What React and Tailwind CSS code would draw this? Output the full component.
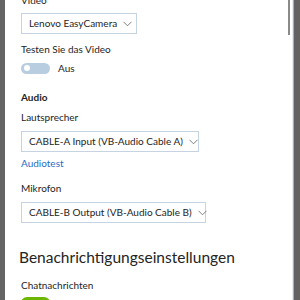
import React from "react";

function Chevron() {
  return (
    <svg width="9" height="6" viewBox="0 0 9 6" className="shrink-0">
      <path d="M0.5 0.8 L4.5 4.8 L8.5 0.8" fill="none" stroke="#707070" strokeWidth="0.9" />
    </svg>
  );
}

function Select({ label, width }) {
  return (
    <div
      className={`flex items-center h-[21px] border border-[#c5d3e2] bg-white pl-[7px] pr-[8px] gap-[6px] ${width}`}
    >
      <span className="text-[10px] text-[#252423] whitespace-nowrap flex-1">{label}</span>
      <Chevron />
    </div>
  );
}

export default function App() {
  return (
    <div
      className="w-[300px] h-[300px] flex bg-white overflow-hidden"
      style={{ fontFamily: 'Lato, "Noto Sans", sans-serif' }}
    >
      <div className="w-[5px] bg-[#646464] shrink-0" />
      <div className="flex-1 relative overflow-hidden pl-[16px] text-[#252423]">
        <div className="flex flex-col -mt-[8px]">
          <div className="h-[16px] flex items-center text-[10px]">Video</div>
          <div className="mt-[5px]">
            <Select label="Lenovo EasyCamera" width="w-[116px]" />
          </div>
          <div className="h-[16px] mt-[7px] flex items-center text-[10px]">Testen Sie das Video</div>
          <div className="flex items-center gap-[8px] h-[12px] mt-[5px]">
            <div className="w-[29px] h-[11px] rounded-full bg-[#b9cde0] flex items-center pl-[3px]">
              <div className="w-[6px] h-[6px] rounded-full bg-white" />
            </div>
            <span className="text-[10px] mt-[1px]">Aus</span>
          </div>
          <div className="h-[16px] mt-[15px] flex items-center text-[10px] font-bold">Audio</div>
          <div className="h-[16px] mt-[4px] flex items-center text-[10px]">Lautsprecher</div>
          <div className="mt-[6px]">
            <Select label="CABLE-A Input (VB-Audio Cable A)" width="w-[178px]" />
          </div>
          <div className="h-[16px] mt-[3px] flex items-center text-[10px] text-[#2a6cc5]">Audiotest</div>
          <div className="h-[16px] mt-[9px] flex items-center text-[10px]">Mikrofon</div>
          <div className="mt-[6px]">
            <Select label="CABLE-B Output (VB-Audio Cable B)" width="w-[185px]" />
          </div>
          <div className="h-[22px] mt-[24px] flex items-center text-[15.5px] -ml-[2px] leading-none">
            Benachrichtigungseinstellungen
          </div>
          <div className="h-[16px] mt-[8px] flex items-center text-[10px]">Chatnachrichten</div>
          <div className="mt-[4px] w-[29px] h-[12px] rounded-full bg-[#6bb700]" />
        </div>
        <div className="absolute right-[2px] top-0 w-[2px] h-[35px] bg-[#8a8a8a]" />
      </div>
      <div className="w-[1px] bg-[#e6ecf2] shrink-0" />
      <div className="w-[1px] bg-[#9fb0c2] shrink-0" />
      <div className="w-[6px] bg-[#626262] shrink-0" />
    </div>
  );
}
